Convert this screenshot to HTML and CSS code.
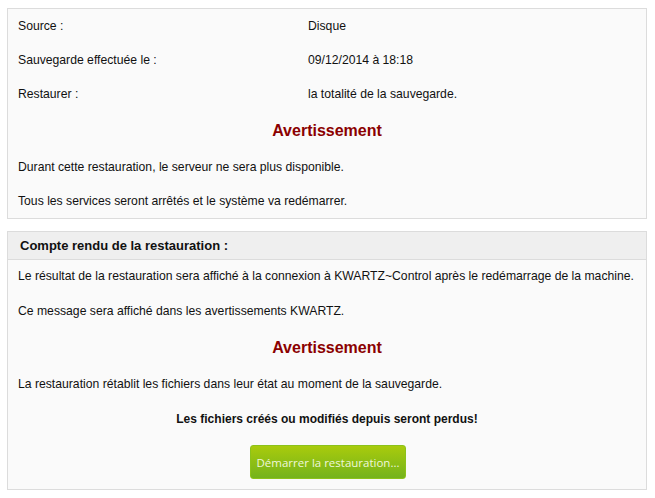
FILE: index.html
```html
<!DOCTYPE html>
<html lang="fr">
<head>
<meta charset="utf-8">
<link rel="stylesheet" href="styles.css">
</head>
<body>
<div class="panel">
  <div class="info">
    <div class="row"><span class="label">Source :</span><span class="value">Disque</span></div>
    <div class="row"><span class="label">Sauvegarde effectuée le :</span><span class="value">09/12/2014 à 18:18</span></div>
    <div class="row"><span class="label">Restaurer :</span><span class="value">la totalité de la sauvegarde.</span></div>
  </div>
  <h2 class="warn warn-top">Avertissement</h2>
  <p class="line">Durant cette restauration, le serveur ne sera plus disponible.</p>
  <p class="line">Tous les services seront arrêtés et le système va redémarrer.</p>
</div>
<div class="panel panel2">
  <div class="head">Compte rendu de la restauration :</div>
  <div class="body">
    <p class="para">Le résultat de la restauration sera affiché à la connexion à KWARTZ~Control après le redémarrage de la machine.</p>
    <p class="para">Ce message sera affiché dans les avertissements KWARTZ.</p>
    <h2 class="warn warn-body">Avertissement</h2>
    <p class="para">La restauration rétablit les fichiers dans leur état au moment de la sauvegarde.</p>
    <p class="para strong">Les fichiers créés ou modifiés depuis seront perdus!</p>
    <div class="actions"><button class="btn" type="button">Démarrer la restauration...</button></div>
  </div>
</div>
</body>
</html>
```
FILE: styles.css
```css
html, body {
  margin: 0;
  padding: 0;
  background: #ffffff;
}
body {
  padding: 8px 8px 0 7px;
  font-family: "Liberation Sans", Arial, sans-serif;
  font-size: 12.2px;
  color: #111111;
}
.panel {
  border: 1px solid #dcdcdc;
  background: #fafafa;
  width: 638px;
}
.info {
  display: flex;
  flex-direction: column;
}
.row {
  display: grid;
  grid-template-columns: 290px 1fr;
  height: 34px;
  line-height: 34px;
  padding-left: 10px;
}
.warn {
  margin: 0;
  text-align: center;
  font-size: 16px;
  font-weight: bold;
  color: #8b0000;
}
.warn-top {
  line-height: 39px;
}
.line {
  margin: 0;
  height: 34px;
  line-height: 34px;
  padding-left: 10px;
}
.panel2 {
  margin-top: 12px;
}
.head {
  background: #efefef;
  border-bottom: 1px solid #dcdcdc;
  height: 27px;
  line-height: 27px;
  padding-left: 12px;
  font-size: 13px;
  font-weight: bold;
  color: #111111;
}
.body {
  padding: 9px 10px 10px 10px;
  display: flex;
  flex-direction: column;
  gap: 21px;
}
.para {
  margin: 0;
  line-height: 14px;
}
.strong {
  font-weight: bold;
  font-size: 12px;
  text-align: center;
}
.warn-body {
  line-height: 20px;
  margin: -1px 0 -2px;
}
.actions {
  display: flex;
  justify-content: center;
  margin-top: -2px;
}
.btn {
  width: 156px;
  height: 34px;
  border: 1px solid #8cc21a;
  border-radius: 3px;
  background: linear-gradient(#a9cb0c, #74b31c);
  color: #eef7dc;
  font-family: "Open Sans", "DejaVu Sans", sans-serif;
  font-size: 11.5px;
  padding: 0;
  margin-left: 2px;
}
```
